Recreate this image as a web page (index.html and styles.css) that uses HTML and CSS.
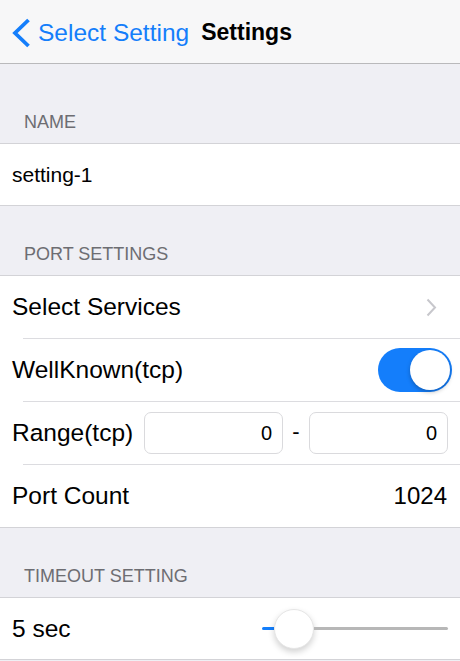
FILE: index.html
```html
<!DOCTYPE html>
<html lang="en">

<head>
    <meta charset="UTF-8" />
    <meta name="viewport" content="width=device-width, initial-scale=1.0" />
    <title>Settings</title>
    <link rel="stylesheet" href="styles.css">
</head>

<body>
    <div class="navbar">
        <a class="back-link" href="#">
            <svg class="back-chevron" width="20" height="30" viewBox="0 0 20 30">
                <path d="M17.5 2 L4 15 L17.5 28" fill="none" stroke="#147efb" stroke-width="3.8" stroke-linecap="butt" stroke-linejoin="miter" />
            </svg>
            <span>Select Setting</span>
        </a>
        <span class="nav-title">Settings</span>
    </div>

    <div class="section-header first">NAME</div>
    <div class="group">
        <div class="row short">
            <span class="name-value">setting-1</span>
        </div>
    </div>

    <div class="section-header">PORT SETTINGS</div>
    <div class="group">
        <div class="row sep">
            <span class="label">Select Services</span>
            <svg class="disclosure" width="11" height="19" viewBox="0 0 11 19">
                <path d="M1.5 1.5 L9 9.5 L1.5 17.5" fill="none" stroke="#c7c7cc" stroke-width="2" />
            </svg>
        </div>
        <div class="row sep switch-row">
            <span class="label">WellKnown(tcp)</span>
            <div class="switch on">
                <div class="switch-thumb"></div>
            </div>
        </div>
        <div class="row sep">
            <span class="label">Range(tcp)</span>
            <div class="range-fields">
                <div class="text-field">0</div>
                <span class="dash">-</span>
                <div class="text-field">0</div>
            </div>
        </div>
        <div class="row last">
            <span class="label">Port Count</span>
            <span class="value">1024</span>
        </div>
    </div>

    <div class="section-header">TIMEOUT SETTING</div>
    <div class="group">
        <div class="row short">
            <span class="label">5 sec</span>
            <div class="slider">
                <div class="slider-min"></div>
                <div class="slider-thumb"></div>
                <div class="slider-max"></div>
            </div>
        </div>
    </div>
</body>

</html>
```

FILE: styles.css
```css
body {
    margin: 0;
    font-family: 'Liberation Sans', Arial, sans-serif;
    background: #efeff4;
    color: #000;
    overflow: hidden;
}

.navbar {
    height: 63px;
    background: #f7f7f8;
    border-bottom: 1px solid #b9b9bb;
    display: flex;
    align-items: center;
    padding-left: 11px;
    box-sizing: content-box;
}

.back-link {
    display: flex;
    align-items: center;
    gap: 7px;
    color: #147efb;
    text-decoration: none;
    font-size: 24.5px;
    margin-top: 2px;
}

.back-chevron {
    margin-top: 1px;
}

.nav-title {
    margin-left: 12px;
    font-size: 23px;
    font-weight: bold;
    margin-top: 2px;
}

.section-header {
    padding: 36px 0 9px 24px;
    line-height: 24px;
    font-size: 18px;
    color: #6d6d72;
}

.section-header.first {
    padding-top: 46px;
}

.group {
    background: #fff;
    border-top: 1px solid #d3d3d7;
    border-bottom: 1px solid #d3d3d7;
}

.row {
    height: 63px;
    display: flex;
    align-items: center;
    padding: 0 12px;
    box-sizing: border-box;
    font-size: 24.5px;
}

.row.sep {
    padding-bottom: 1px;
    background: linear-gradient(#dcdce0, #dcdce0) no-repeat left 23px bottom / calc(100% - 23px) 1px;
}

.row.last {
    height: 62px;
}

.row.short {
    height: 61px;
}

.name-value {
    font-size: 21px;
}

.disclosure {
    margin-left: auto;
    margin-right: 11px;
}

.switch-row {
    padding-right: 8px;
}

.switch {
    margin-left: auto;
    width: 74px;
    height: 44px;
    border-radius: 22px;
    background: #147efb;
    display: flex;
    align-items: center;
    justify-content: flex-end;
    padding: 2px;
    box-sizing: border-box;
}

.switch-thumb {
    width: 40px;
    height: 40px;
    border-radius: 50%;
    background: #fff;
    box-shadow: 0 2px 4px rgba(0, 0, 0, 0.25);
}

.range-fields {
    margin-left: auto;
    display: flex;
    align-items: center;
    gap: 0;
}

.text-field {
    width: 139px;
    height: 42px;
    box-sizing: border-box;
    border: 1px solid #dadadd;
    border-radius: 7px;
    text-align: right;
    padding-right: 10px;
    line-height: 40px;
    font-size: 20px;
}

.dash {
    width: 26px;
    text-align: center;
    font-size: 22px;
    margin-top: -2px;
}

.value {
    margin-left: auto;
    font-size: 24px;
    margin-right: 1px;
}

.slider {
    margin-left: auto;
    width: 186px;
    height: 44px;
    display: flex;
    align-items: center;
}

.slider-min {
    width: 12px;
    height: 3px;
    background: #147efb;
    border-radius: 2px 0 0 2px;
}

.slider-thumb {
    width: 40px;
    height: 40px;
    flex-shrink: 0;
    border-radius: 50%;
    background: #fff;
    border: 1px solid #e6e6e6;
    box-sizing: border-box;
    box-shadow: 0 3px 6px rgba(0, 0, 0, 0.18);
}

.slider-max {
    flex: 1;
    height: 3px;
    background: #b7b7b7;
    border-radius: 0 2px 2px 0;
}
```
